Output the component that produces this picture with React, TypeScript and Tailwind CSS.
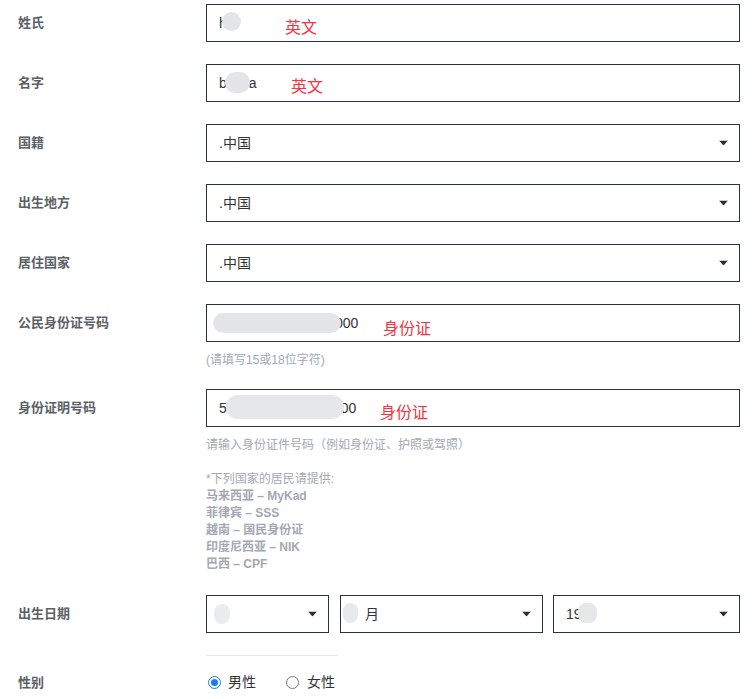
const font = { fontFamily: '"Liberation Sans", "Noto Sans CJK SC", sans-serif' };

function Caret() {
  return (
    <svg width="9" height="5" viewBox="0 0 9 5" className="absolute right-[11px] top-1/2 -translate-y-1/2">
      <path d="M0 0 H9 L4.5 5 Z" fill="#2b2f36" />
    </svg>
  );
}

function Blob({ className }: { className: string }) {
  return <span className={"absolute rounded-full bg-[#e3e5e8] " + className} />;
}

function Note({ text, className }: { text: string; className: string }) {
  return <span className={"absolute text-[16px] leading-none text-[#f5333f] " + className}>{text}</span>;
}

function Box({ children, select, className = "" }: { children?: React.ReactNode; select?: boolean; className?: string }) {
  return (
    <div className={"relative h-[38px] border border-[#2a3240] bg-white pl-[12px] flex items-center text-[14px] text-[#333] " + className}>
      {children}
      {select && <Caret />}
    </div>
  );
}

function Row({ label, children, className = "" }: { label: string; children: React.ReactNode; className?: string }) {
  return (
    <div className={"flex " + className}>
      <div className="w-[206px] shrink-0 pl-[18px] leading-[37px] text-[13px] font-bold text-[#5b5f66]">{label}</div>
      <div className="w-[534px]">{children}</div>
    </div>
  );
}

export default function App() {
  return (
    <div style={font} className="w-[754px] h-[699px] bg-white overflow-hidden pt-[4px]">
      <Row label="姓氏">
        <Box>
          <span>h</span>
          <Blob className="left-[15px] top-[7px] w-[19px] h-[19px]" />
          <Note text="英文" className="left-[78px] top-[15px]" />
        </Box>
      </Row>
      <Row label="名字" className="mt-[22px]">
        <Box>
          <span>b</span>
          <span className="ml-[22px]">a</span>
          <Blob className="left-[18px] top-[7px] w-[25px] h-[21px] !rounded-[10px] bg-[#dcdee1]" />
          <Note text="英文" className="left-[84px] top-[14px]" />
        </Box>
      </Row>
      <Row label="国籍" className="mt-[22px]">
        <Box select>.中国</Box>
      </Row>
      <Row label="出生地方" className="mt-[22px]">
        <Box select>.中国</Box>
      </Row>
      <Row label="居住国家" className="mt-[22px]">
        <Box select>.中国</Box>
      </Row>
      <Row label="公民身份证号码" className="mt-[22px]">
        <Box>
          <span className="ml-[116px]">000</span>
          <Blob className="left-[6px] top-[8px] w-[128px] h-[20px] bg-[#e0e2e5]" />
          <Note text="身份证" className="left-[176px] top-[16px]" />
        </Box>
        <div className="mt-[10px] text-[12px] leading-[17px] text-[#a3a8b2]">(请填写15或18位字符)</div>
      </Row>
      <Row label="身份证明号码" className="mt-[20px]">
        <Box>
          <span>5</span>
          <span className="ml-[114px]">00</span>
          <Blob className="left-[19px] top-[5px] w-[118px] h-[24px] bg-[#e6e7e9]" />
          <Note text="身份证" className="left-[173px] top-[15px]" />
        </Box>
        <div className="mt-[10px] text-[12px] leading-[17px] text-[#a3a8b2]">
          <div>请输入身份证件号码（例如身份证、护照或驾照）</div>
          <div className="mt-[17px]">*下列国家的居民请提供:</div>
          <div className="font-bold">马来西亚 – MyKad</div>
          <div className="font-bold">菲律宾 – SSS</div>
          <div className="font-bold">越南 – 国民身份证</div>
          <div className="font-bold">印度尼西亚 – NIK</div>
          <div className="font-bold">巴西 – CPF</div>
        </div>
      </Row>
      <Row label="出生日期" className="mt-[22px]">
        <div className="flex">
          <Box select className="w-[123px]">
            <Blob className="left-[7px] top-[8px] w-[16px] h-[20px] bg-[#ebecee]" />
          </Box>
          <Box select className="w-[203px] ml-[11px]">
            <span className="ml-[12px]">月</span>
            <Blob className="left-[2px] top-[7px] w-[15px] h-[20px] bg-[#e8e9eb]" />
          </Box>
          <Box select className="w-[187px] ml-[10px]">
            <span>19</span>
            <Blob className="left-[24px] top-[7px] w-[19px] h-[20px] !rounded-[8px] bg-[#e6e7e9]" />
          </Box>
        </div>
        <div className="mt-[22px] w-[132px] border-t border-[#e6e8eb]" />
      </Row>
      <Row label="性别" className="mt-[8px]">
        <div className="flex items-center h-[37px] text-[14px] text-[#333]">
          <span className="ml-[2px] w-[13px] h-[13px] rounded-full border border-[#1a7cf2] flex items-center justify-center">
            <span className="w-[7px] h-[7px] rounded-full bg-[#1a7cf2]" />
          </span>
          <span className="ml-[7px]">男性</span>
          <span className="ml-[30px] w-[13px] h-[13px] rounded-full border border-[#777]" />
          <span className="ml-[8px]">女性</span>
        </div>
      </Row>
    </div>
  );
}
